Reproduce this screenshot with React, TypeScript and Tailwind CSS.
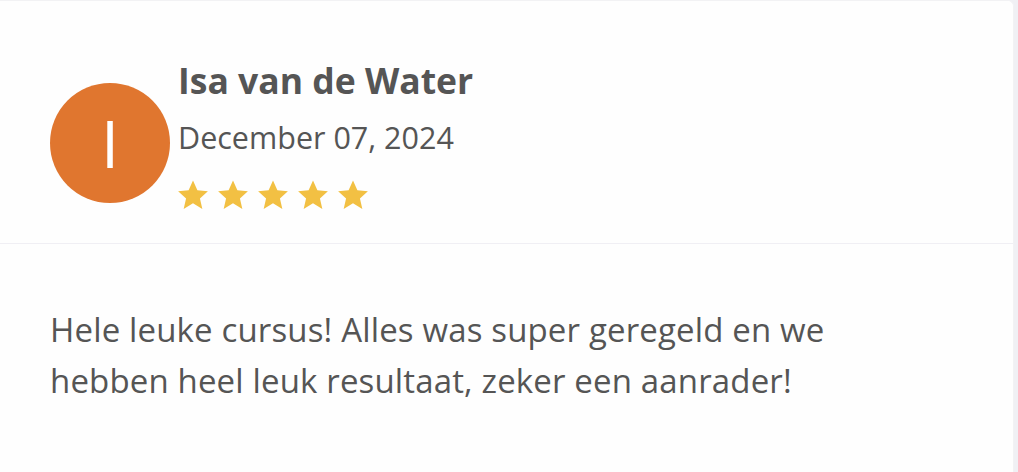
import React from "react";

const Star = () => (
  <svg viewBox="0 0 24 24" className="h-[34px] w-[34px]" fill="#f2c043">
    <path d="M12 1.8l3.1 6.9 7.4.7-5.6 5 1.7 7.4L12 17.9l-6.6 3.9 1.7-7.4-5.6-5 7.4-.7z" />
  </svg>
);

const ReviewCard = () => {
  const review = {
    name: "Isa van de Water",
    date: "December 07, 2024",
    rating: 5,
    text: "Hele leuke cursus! Alles was super geregeld en we hebben heel leuk resultaat, zeker een aanrader!",
  };

  return (
    <div className="min-h-[472px] w-[1014px] rounded-tr-md border-t border-r border-[#f2f2f4] bg-[#fefefe]">
      <div className="flex h-[243px] items-start border-b border-[#f0eff4] pl-[50px] pt-[82px]">
        <div className="flex h-[120px] w-[120px] shrink-0 items-center justify-center rounded-full bg-[#e0762f]">
          <span className="font-['Open_Sans',sans-serif] text-[65px] font-medium leading-none text-white">
            {review.name[0]}
          </span>
        </div>
        <div className="-mt-[25px] ml-[8px] flex flex-col">
          <h4 className="font-['Open_Sans',sans-serif] text-[35.5px] font-bold leading-[44px] text-[#555555]">
            {review.name}
          </h4>
          <span className="mt-[17px] font-['Open_Sans',sans-serif] text-[30.5px] leading-[36px] text-[#555555]">
            {review.date}
          </span>
          <div className="mt-[23px] -ml-[2px] flex gap-[6px]">
            {Array.from({ length: review.rating }).map((_, i) => (
              <Star key={i} />
            ))}
          </div>
        </div>
      </div>
      <p className="max-w-[920px] px-[50px] pt-[60px] font-['Open_Sans',sans-serif] text-[33px] leading-[51px] tracking-[0.15px] text-[#555555]">
        {review.text}
      </p>
    </div>
  );
};

export default function App() {
  return (
    <div className="min-h-[472px] bg-[#f0f0f4]">
      <ReviewCard />
    </div>
  );
}
